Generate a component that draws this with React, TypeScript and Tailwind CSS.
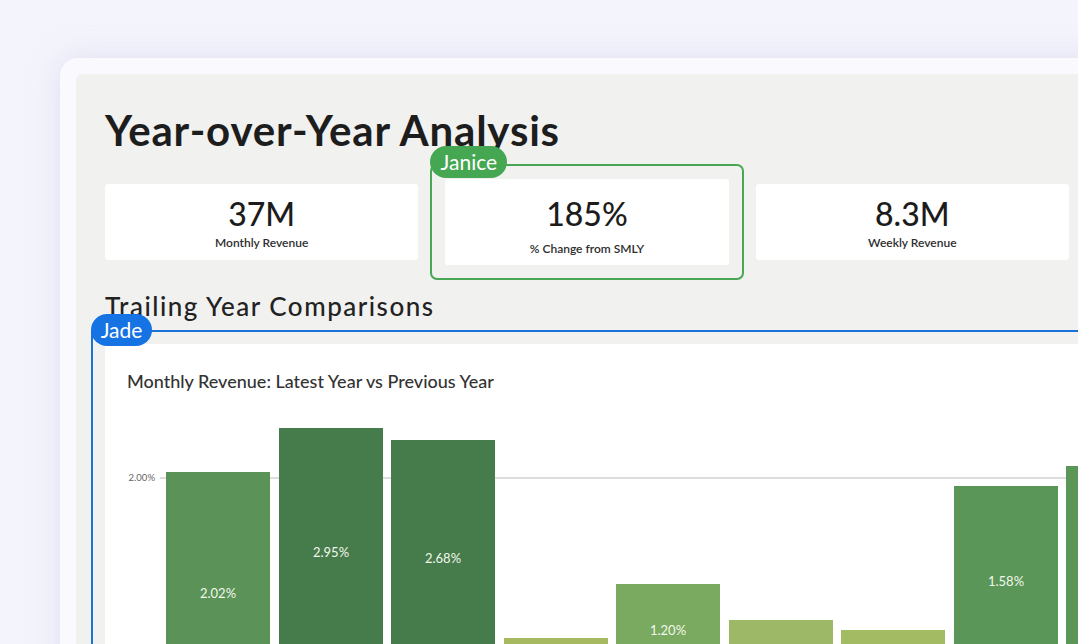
const bars = [
  { x: 61, top: 79, fill: "#5a9258", label: "2.02%", ly: 200 },
  { x: 174, top: 35, fill: "#467b4b", label: "2.95%", ly: 159 },
  { x: 286, top: 47, fill: "#467b4b", label: "2.68%", ly: 165 },
  { x: 399, top: 245, fill: "#a6b860", label: "", ly: 0 },
  { x: 511, top: 191, fill: "#7aaa60", label: "1.20%", ly: 237 },
  { x: 624, top: 227, fill: "#9db866", label: "1.03%", ly: 257 },
  { x: 736, top: 237, fill: "#a3bb63", label: "", ly: 0 },
  { x: 849, top: 93, fill: "#5b9659", label: "1.58%", ly: 188 },
  { x: 961, top: 73, fill: "#5b9659", label: "", ly: 0 },
];

const Kpi = ({ value, label }: { value: string; label: string }) => (
  <div className="flex h-[76px] flex-col items-center rounded-[3px] bg-white pt-[12px]">
    <div className="text-[32px] font-medium leading-[36px] text-[#1c1c1c]">{value}</div>
    <div className="mt-[3px] text-[12px] font-semibold leading-[16px] text-[#2e2e2e]">{label}</div>
  </div>
);

const App = () => {
  return (
    <div className="h-[644px] w-[1078px] overflow-hidden bg-[#f4f4fc] pl-[60px] pt-[58px] font-['Lato',sans-serif]">
      <div className="h-[700px] w-[1100px] rounded-tl-[18px] bg-[#fafafe] pl-[16px] pt-[16px] shadow-[0_0_30px_rgba(190,190,225,0.35)]">
        <div className="h-full rounded-tl-[6px] bg-[#f1f1f0] pl-[29px] pt-[31px]">
          <h1 className="text-[42px] font-bold leading-[50px] tracking-[0.8px] text-[#1d1d1d]">
            Year-over-Year Analysis
          </h1>

          <div className="mt-[9px] grid w-[964px] grid-cols-3 items-center gap-[12px]">
            <Kpi value="37M" label="Monthly Revenue" />
            <div className="relative rounded-[7px] border-2 border-[#48a655] p-[13px]">
              <span className="absolute -left-[2px] -top-[20px] flex h-[32px] w-[77px] items-center justify-center rounded-[16px] bg-[#45a752] text-[21px] text-white">
                Janice
              </span>
              <div className="flex h-[86px] flex-col items-center rounded-[3px] bg-white pt-[17px]">
                <div className="text-[32px] font-medium leading-[36px] text-[#1c1c1c]">185%</div>
                <div className="mt-[9px] text-[12px] font-semibold leading-[16px] text-[#2e2e2e]">
                  % Change from SMLY
                </div>
              </div>
            </div>
            <Kpi value="8.3M" label="Weekly Revenue" />
          </div>

          <h2 className="mt-[10px] text-[26px] font-medium leading-[32px] tracking-[1.5px] text-[#222]">
            Trailing Year Comparisons
          </h2>

          <div className="relative -ml-[14px] mt-[8px] w-[1010px] border-2 border-[#1a72d6] bg-[#f1f1f0] p-[12px]">
            <span className="absolute -left-[2px] -top-[18px] flex h-[32px] w-[61px] items-center justify-center rounded-[16px] bg-[#1673e3] text-[21px] text-white">
              Jade
            </span>
            <div className="h-[400px] rounded-[3px] bg-white pt-[25px]">
              <div className="pl-[22px] text-[18px] font-medium leading-[24px] text-[#333]">
                Monthly Revenue: Latest Year vs Previous Year
              </div>
              <svg width="1000" height="300" className="block">
                <line x1="55" y1="85" x2="1000" y2="85" stroke="#d2d2d2" strokeWidth="1.5" />
                <text x="50" y="88" textAnchor="end" fontSize="9.5" fill="#666" fontFamily="Lato, sans-serif">
                  2.00%
                </text>
                {bars.map((b) => (
                  <g key={b.x}>
                    <rect x={b.x} y={b.top} width="104" height={300 - b.top} fill={b.fill} />
                    {b.label && (
                      <text
                        x={b.x + 52}
                        y={b.ly}
                        textAnchor="middle"
                        dominantBaseline="central"
                        fontSize="13"
                        fill="#f2f8ec"
                        fontFamily="Lato, sans-serif"
                      >
                        {b.label}
                      </text>
                    )}
                  </g>
                ))}
              </svg>
            </div>
          </div>
        </div>
      </div>
    </div>
  );
};

export default App;
